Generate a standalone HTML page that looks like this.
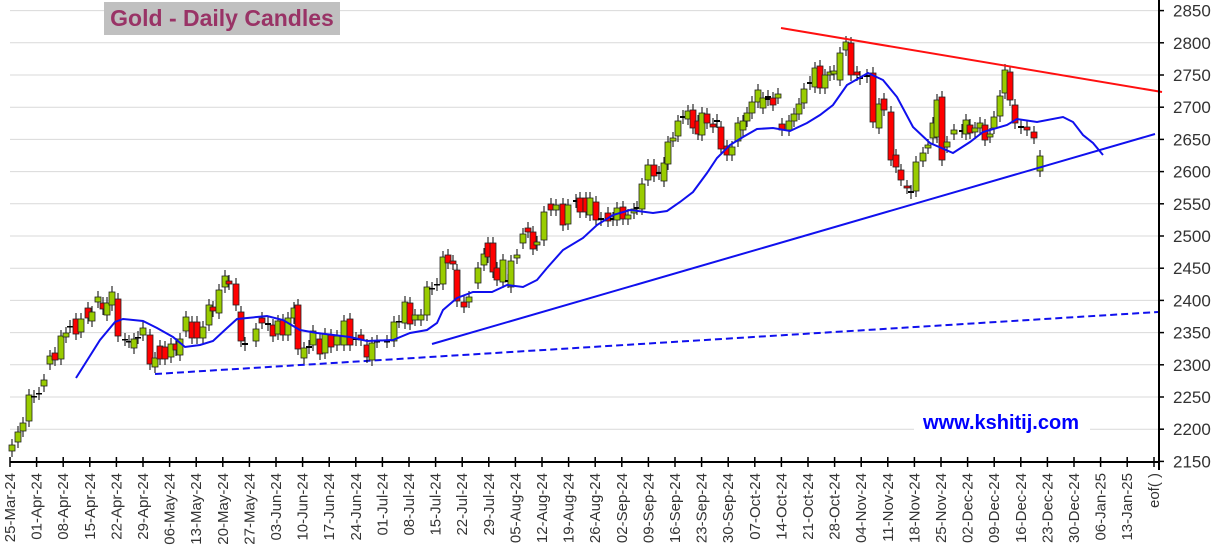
<!DOCTYPE html>
<html><head><meta charset="utf-8">
<style>
body{margin:0;background:#fff;width:1213px;height:558px;overflow:hidden;font-family:"Liberation Sans",Arial,sans-serif}
</style></head>
<body>
<svg id="s" width="1213" height="558" xmlns="http://www.w3.org/2000/svg" style="position:absolute;left:0;top:0">
<g id="grid"></g>
<rect x="104" y="2" width="236" height="33" fill="#c0c0c0"/>
<text x="222" y="26" text-anchor="middle" font-family="Liberation Sans, sans-serif" font-weight="bold" font-size="23" fill="#993366">Gold - Daily Candles</text>
<rect x="914" y="408" width="176" height="28" fill="#fff"/>
<text x="1001" y="429" text-anchor="middle" font-family="Liberation Sans, sans-serif" font-weight="bold" font-size="20" fill="#0000ff">www.kshitij.com</text>
<line x1="155" y1="374" x2="1158" y2="312" stroke="#1010ee" stroke-width="2" stroke-dasharray="7,4"/>
<g id="candles"></g>
<polyline fill="none" stroke="#1010ee" stroke-width="2" points="76,378 100,340 115,322 123,319 143,321 157,328 173,337 185,347 200,345 213,341 227,328 237,319 267,316 283,320 300,330 317,333 350,337 367,341 393,340 410,333 427,330 437,323 443,310 457,298 473,292 492,292 507,285 523,287 537,280 547,268 563,250 583,238 597,225 613,215 630,210 653,213 667,211 680,202 693,192 707,173 717,158 730,145 743,137 757,129 773,128 790,131 807,123 820,115 833,105 847,85 868,73 883,80 897,97 913,127 930,143 953,153 970,142 983,132 1007,125 1017,119 1037,122 1063,117 1073,122 1083,135 1093,143 1103,155"/>
<line x1="432" y1="344" x2="1155" y2="134" stroke="#1010ee" stroke-width="2"/>
<line x1="781" y1="28" x2="1162" y2="92" stroke="#ff1010" stroke-width="2"/>
<g id="axes"></g>
</svg>
<script>
var NS="http://www.w3.org/2000/svg";
function el(p,t,a,txt){var e=document.createElementNS(NS,t);for(var k in a)e.setAttribute(k,a[k]);if(txt)e.textContent=txt;p.appendChild(e);return e;}
var grid=document.getElementById('grid'),ax=document.getElementById('axes'),cg=document.getElementById('candles');
for(var i=0;i<=14;i++){var y=10.6+i*32.2;var v=2850-i*50;
 if(i<14)el(grid,'line',{x1:10,x2:1158,y1:y,y2:y,stroke:'#d9d9d9','stroke-width':1});
 el(ax,'line',{x1:1158,x2:1164,y1:y,y2:y,stroke:'#000','stroke-width':1.5});
 el(ax,'text',{x:1173,y:y+6,'font-size':17,fill:'#333','font-family':'Liberation Sans, sans-serif'},String(v));}
el(ax,'line',{x1:1159,x2:1159,y1:0,y2:470,stroke:'#000','stroke-width':2});
el(ax,'line',{x1:10,x2:1159,y1:462,y2:462,stroke:'#000','stroke-width':2});
var labs=["25-Mar-24","01-Apr-24","08-Apr-24","15-Apr-24","22-Apr-24","29-Apr-24","06-May-24","13-May-24","20-May-24","27-May-24","03-Jun-24","10-Jun-24","17-Jun-24","24-Jun-24","01-Jul-24","08-Jul-24","15-Jul-24","22-Jul-24","29-Jul-24","05-Aug-24","12-Aug-24","19-Aug-24","26-Aug-24","02-Sep-24","09-Sep-24","16-Sep-24","23-Sep-24","30-Sep-24","07-Oct-24","14-Oct-24","21-Oct-24","28-Oct-24","04-Nov-24","11-Nov-24","18-Nov-24","25-Nov-24","02-Dec-24","09-Dec-24","16-Dec-24","23-Dec-24","30-Dec-24","06-Jan-25","13-Jan-25","eof( )"];
labs.forEach(function(l,i){var x=i<43?10+i*26.6:1154;
 el(ax,'line',{x1:x,x2:x,y1:457,y2:467,stroke:'#000','stroke-width':1.5});
 el(ax,'text',{x:0,y:0,'font-size':15,fill:'#333','text-anchor':'end','font-family':'Liberation Sans, sans-serif',transform:'translate('+(x+5)+',473) rotate(-90)'},l);});
var d=[[12,445,451,'g'],[18,432,442,'g'],[23,423,431,'g'],[29,395,421,'g'],[34,396,397,'d'],[39,393,394,'d'],[44,380,386,'g'],[50,356,364,'g'],[55,353,360,'r'],[61,336,359,'g'],[66,333,337,'g'],[70,326,327,'d'],[76,319,334,'r'],[81,319,332,'g'],[88,308,318,'r'],[92,312,321,'g'],[98,297,302,'g'],[103,303,309,'r'],[107,303,315,'g'],[112,292,305,'g'],[118,299,336,'r'],[125,339,340,'d'],[129,341,342,'d'],[134,339,348,'g'],[138,337,338,'d'],[143,328,335,'g'],[150,335,364,'r'],[155,358,367,'g'],[160,346,359,'r'],[165,347,359,'r'],[171,344,357,'g'],[176,344,350,'r'],[180,339,355,'g'],[186,317,331,'g'],[192,322,338,'r'],[197,322,338,'r'],[203,327,338,'g'],[209,305,325,'g'],[213,307,311,'r'],[219,290,313,'g'],[225,276,287,'g'],[229,281,284,'r'],[236,284,305,'r'],[241,312,341,'r'],[245,343,345,'d'],[256,329,341,'g'],[262,318,323,'r'],[268,323,325,'d'],[273,325,336,'r'],[278,321,334,'g'],[283,320,335,'r'],[288,318,335,'g'],[294,308,318,'g'],[298,305,349,'r'],[304,348,358,'g'],[309,346,348,'d'],[313,331,345,'g'],[320,339,354,'r'],[325,334,353,'g'],[331,335,347,'r'],[337,336,345,'g'],[344,321,345,'g'],[350,319,345,'r'],[356,338,340,'d'],[361,335,340,'r'],[367,345,357,'r'],[372,343,360,'g'],[377,341,342,'d'],[387,341,342,'d'],[394,322,341,'g'],[399,321,322,'d'],[405,302,323,'g'],[410,303,324,'r'],[415,315,320,'g'],[421,315,320,'g'],[427,287,315,'g'],[432,288,289,'d'],[437,284,285,'d'],[443,257,284,'g'],[448,255,263,'r'],[453,261,264,'r'],[457,270,301,'r'],[464,302,307,'r'],[469,297,302,'g'],[478,268,283,'g'],[484,254,265,'g'],[488,243,257,'r'],[493,243,272,'r'],[497,268,280,'r'],[503,260,282,'g'],[508,280,282,'d'],[511,261,287,'g'],[517,255,258,'g'],[523,234,243,'g'],[528,228,232,'r'],[533,232,249,'r'],[537,242,245,'g'],[544,212,240,'g'],[551,204,210,'r'],[556,205,210,'g'],[563,204,225,'r'],[568,205,224,'g'],[576,200,202,'d'],[580,198,212,'r'],[586,198,212,'r'],[590,198,215,'g'],[596,202,220,'r'],[601,218,220,'d'],[608,213,221,'r'],[613,218,220,'d'],[617,208,220,'g'],[623,207,219,'r'],[628,215,219,'g'],[634,209,213,'g'],[637,207,209,'d'],[642,184,209,'g'],[648,165,180,'g'],[654,165,176,'r'],[659,172,174,'d'],[664,163,181,'g'],[668,142,164,'g'],[673,138,141,'g'],[678,121,136,'g'],[683,116,118,'d'],[688,111,119,'g'],[693,110,128,'r'],[698,121,134,'r'],[702,113,135,'g'],[707,114,123,'r'],[713,124,127,'r'],[717,120,122,'d'],[721,127,149,'r'],[727,146,155,'r'],[732,147,155,'g'],[738,123,141,'g'],[743,121,130,'g'],[747,113,121,'g'],[752,102,113,'g'],[758,90,102,'g'],[763,98,108,'g'],[768,96,100,'d'],[773,98,105,'r'],[778,94,98,'g'],[782,124,130,'r'],[789,121,130,'g'],[794,114,121,'g'],[799,104,114,'g'],[804,89,103,'g'],[810,82,84,'d'],[815,68,87,'g'],[820,66,88,'r'],[825,75,88,'g'],[830,72,75,'g'],[834,71,74,'g'],[840,53,80,'g'],[846,42,50,'g'],[851,43,75,'r'],[857,72,75,'r'],[860,77,79,'d'],[867,75,77,'d'],[873,73,122,'r'],[879,104,128,'g'],[884,99,110,'r'],[891,112,160,'r'],[896,155,167,'r'],[901,170,180,'r'],[907,186,188,'r'],[911,191,193,'d'],[916,162,191,'g'],[923,153,161,'g'],[928,145,148,'g'],[933,123,138,'g'],[937,100,137,'g'],[942,97,160,'r'],[947,142,147,'g'],[954,130,134,'g'],[962,130,132,'d'],[966,120,134,'g'],[970,125,133,'r'],[975,128,132,'g'],[980,123,128,'g'],[985,125,140,'r'],[990,134,137,'g'],[994,117,128,'g'],[1000,96,116,'g'],[1005,70,93,'g'],[1010,72,100,'r'],[1015,105,123,'r'],[1021,126,128,'d'],[1027,127,130,'r'],[1034,132,138,'r'],[1040,156,171,'g']];
d.forEach(function(c){var x=c[0],t=c[1],b=c[2];
 el(cg,'line',{x1:x,x2:x,y1:t-6,y2:b+6,stroke:'#000','stroke-width':1});
 if(c[3]=='d'){el(cg,'rect',{x:x-3,y:t,width:6,height:Math.max(1.5,b-t),fill:'#000'});}
 else el(cg,'rect',{x:x-3,y:t,width:6,height:Math.max(2,b-t),fill:c[3]=='g'?'#99cc00':'#ff0000',stroke:'#222','stroke-width':0.8});});
</script>
</body></html>
